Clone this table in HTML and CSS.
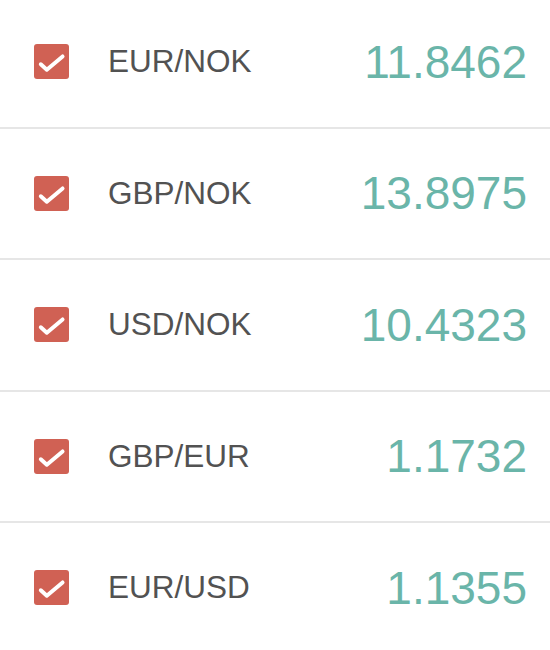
FILE: index.html
```html
<!DOCTYPE html>
<html>
<head>
<meta charset="utf-8">
<link rel="stylesheet" href="styles.css">
</head>
<body>
<ul class="rates">
  <li class="row">
    <span class="check"><svg viewBox="0 0 35 35" width="35" height="35"><polyline points="6.8,20.2 12.8,25.8 28.6,12.4"/></svg></span>
    <span class="pair">EUR/NOK</span>
    <span class="rate">11.8462</span>
  </li>
  <li class="row">
    <span class="check"><svg viewBox="0 0 35 35" width="35" height="35"><polyline points="6.8,20.2 12.8,25.8 28.6,12.4"/></svg></span>
    <span class="pair">GBP/NOK</span>
    <span class="rate">13.8975</span>
  </li>
  <li class="row">
    <span class="check"><svg viewBox="0 0 35 35" width="35" height="35"><polyline points="6.8,20.2 12.8,25.8 28.6,12.4"/></svg></span>
    <span class="pair">USD/NOK</span>
    <span class="rate">10.4323</span>
  </li>
  <li class="row">
    <span class="check"><svg viewBox="0 0 35 35" width="35" height="35"><polyline points="6.8,20.2 12.8,25.8 28.6,12.4"/></svg></span>
    <span class="pair">GBP/EUR</span>
    <span class="rate">1.1732</span>
  </li>
  <li class="row">
    <span class="check"><svg viewBox="0 0 35 35" width="35" height="35"><polyline points="6.8,20.2 12.8,25.8 28.6,12.4"/></svg></span>
    <span class="pair">EUR/USD</span>
    <span class="rate">1.1355</span>
  </li>
</ul>
</body>
</html>
```
FILE: styles.css
```css
html, body {
  margin: 0;
  padding: 0;
  background: #ffffff;
  overflow: hidden;
}
.rates {
  list-style: none;
  margin: -3px 0 0 0;
  padding: 0;
}
.row {
  box-sizing: border-box;
  height: 131.5px;
  display: flex;
  align-items: center;
  padding: 0 23px 0 34px;
  border-bottom: 2px solid #e6e6e6;
}
.check {
  width: 35px;
  height: 35px;
  border-radius: 3px;
  background: #d06154;
  flex: none;
  display: block;
}
.check svg {
  display: block;
}
.check polyline {
  fill: none;
  stroke: #ffffff;
  stroke-width: 3.9;
  stroke-linecap: round;
  stroke-linejoin: round;
}
.pair {
  margin-left: 39px;
  font-family: "Liberation Sans", Arial, sans-serif;
  font-size: 31.5px;
  color: #525252;
  flex: 1;
}
.rate {
  font-family: "Liberation Sans", Arial, sans-serif;
  font-size: 46px;
  color: #6ab5a9;
}
```
